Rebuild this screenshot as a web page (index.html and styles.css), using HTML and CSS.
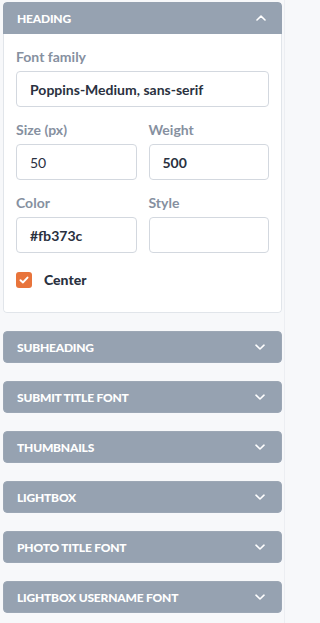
FILE: index.html
```html
<!DOCTYPE html>
<html>
<head>
<meta charset="utf-8">
<link rel="stylesheet" href="styles.css">
</head>
<body>
<div class="sidebar">
  <section class="panel open">
    <header class="panel-head">
      <span class="panel-title">HEADING</span>
      <svg class="chev" width="10" height="6" viewBox="0 0 10 6"><path d="M1 5 L5 1.2 L9 5" fill="none" stroke="#fff" stroke-width="1.6" stroke-linecap="round" stroke-linejoin="round"/></svg>
    </header>
    <div class="panel-body">
      <div class="field">
        <label class="lbl">Font family</label>
        <div class="input bold">Poppins-Medium, sans-serif</div>
      </div>
      <div class="row">
        <div class="field">
          <label class="lbl">Size (px)</label>
          <div class="input">50</div>
        </div>
        <div class="field">
          <label class="lbl">Weight</label>
          <div class="input bold">500</div>
        </div>
      </div>
      <div class="row">
        <div class="field">
          <label class="lbl">Color</label>
          <div class="input bold">#fb373c</div>
        </div>
        <div class="field">
          <label class="lbl">Style</label>
          <div class="input"></div>
        </div>
      </div>
      <div class="check">
        <span class="box"><svg width="10" height="8" viewBox="0 0 10 8"><path d="M1.5 4.2 L4 6.4 L8.5 1.6" fill="none" stroke="#fff" stroke-width="2" stroke-linecap="round" stroke-linejoin="round"/></svg></span>
        <span class="check-lbl">Center</span>
      </div>
    </div>
  </section>
  <section class="panel"><header class="panel-head"><span class="panel-title">SUBHEADING</span><svg class="chev" width="10" height="6" viewBox="0 0 10 6"><path d="M1 1.2 L5 5 L9 1.2" fill="none" stroke="#fff" stroke-width="1.6" stroke-linecap="round" stroke-linejoin="round"/></svg></header></section>
  <section class="panel"><header class="panel-head"><span class="panel-title">SUBMIT TITLE FONT</span><svg class="chev" width="10" height="6" viewBox="0 0 10 6"><path d="M1 1.2 L5 5 L9 1.2" fill="none" stroke="#fff" stroke-width="1.6" stroke-linecap="round" stroke-linejoin="round"/></svg></header></section>
  <section class="panel"><header class="panel-head"><span class="panel-title">THUMBNAILS</span><svg class="chev" width="10" height="6" viewBox="0 0 10 6"><path d="M1 1.2 L5 5 L9 1.2" fill="none" stroke="#fff" stroke-width="1.6" stroke-linecap="round" stroke-linejoin="round"/></svg></header></section>
  <section class="panel"><header class="panel-head"><span class="panel-title">LIGHTBOX</span><svg class="chev" width="10" height="6" viewBox="0 0 10 6"><path d="M1 1.2 L5 5 L9 1.2" fill="none" stroke="#fff" stroke-width="1.6" stroke-linecap="round" stroke-linejoin="round"/></svg></header></section>
  <section class="panel"><header class="panel-head"><span class="panel-title">PHOTO TITLE FONT</span><svg class="chev" width="10" height="6" viewBox="0 0 10 6"><path d="M1 1.2 L5 5 L9 1.2" fill="none" stroke="#fff" stroke-width="1.6" stroke-linecap="round" stroke-linejoin="round"/></svg></header></section>
  <section class="panel"><header class="panel-head"><span class="panel-title">LIGHTBOX USERNAME FONT</span><svg class="chev" width="10" height="6" viewBox="0 0 10 6"><path d="M1 1.2 L5 5 L9 1.2" fill="none" stroke="#fff" stroke-width="1.6" stroke-linecap="round" stroke-linejoin="round"/></svg></header></section>
</div>
</body>
</html>
```
FILE: styles.css
```css
html, body {
  margin: 0;
  padding: 0;
  background: #f7f8fa;
}
body {
  font-family: Lato, "Liberation Sans", sans-serif;
  width: 287px;
  height: 623px;
  overflow: hidden;
}
.sidebar {
  box-sizing: border-box;
  width: 285px;
  height: 623px;
  padding: 2px 2px 0 3px;
  border-right: 1px solid #eceef2;
  display: flex;
  flex-direction: column;
  gap: 18px;
}
.panel {
  border-radius: 4px;
  overflow: hidden;
}
.panel-head {
  box-sizing: border-box;
  height: 32px;
  background: #96a2b1;
  display: flex;
  align-items: center;
  justify-content: space-between;
  padding: 0 16px 0 13px;
  border: 1px solid #9ca7b5;
  border-radius: 4px;
}
.panel.open .panel-head {
  border-radius: 4px 4px 0 0;
  border: none;
  padding-left: 14px;
}
.panel-title {
  color: #fff;
  font-weight: 900;
  font-size: 12px;
  letter-spacing: -0.2px;
}
.chev { display: block; }
.panel-body {
  background: #fff;
  border: 1px solid #e1e5ea;
  border-top: none;
  border-radius: 0 0 4px 4px;
  padding: 14px 12px 24px 12px;
  display: flex;
  flex-direction: column;
  gap: 14px;
}
.row {
  display: grid;
  grid-template-columns: 1fr 1fr;
  gap: 12px;
}
.field {
  display: flex;
  flex-direction: column;
  gap: 5px;
}
.lbl {
  color: #8690a0;
  font-weight: 700;
  font-size: 14px;
  line-height: 18px;
}
.input {
  box-sizing: border-box;
  height: 36px;
  border: 1px solid #d3d8df;
  border-radius: 4px;
  padding: 0 13px;
  display: flex;
  align-items: center;
  font-size: 14px;
  color: #2a3140;
}
.input.bold { font-weight: 700; }
.check {
  display: flex;
  align-items: center;
  gap: 12px;
  margin-top: 4px;
}
.box {
  width: 16px;
  height: 16px;
  border-radius: 3px;
  background: #e8743b;
  display: flex;
  align-items: center;
  justify-content: center;
}
.check-lbl {
  font-weight: 900;
  font-size: 14px;
  color: #2a3140;
}
```
